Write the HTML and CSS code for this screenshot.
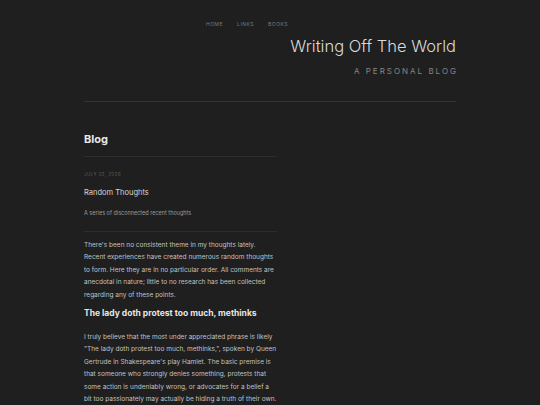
FILE: index.html
```html
<!DOCTYPE html>
<html>
<head>
<meta charset="utf-8">
<link rel="stylesheet" href="styles.css">
</head>
<body>
<div class="page">
  <header class="site-header">
    <nav class="nav">
      <a href="#">HOME</a>
      <a href="#">LINKS</a>
      <a href="#">BOOKS</a>
    </nav>
    <h1 class="site-title">Writing Off The World</h1>
    <div class="site-sub">A PERSONAL BLOG</div>
  </header>
  <main class="main">
    <div class="col">
      <h2 class="section-title">Blog</h2>
      <div class="post-head">
        <div class="date">JULY 02, 2026</div>
        <div class="post-title">Random Thoughts</div>
        <div class="post-desc">A series of disconnected recent thoughts</div>
      </div>
      <div class="post-body">
        <p>There's been no consistent theme in my thoughts lately. Recent experiences have created numerous random thoughts to form. Here they are in no particular order. All comments are anecdotal in nature; little to no research has been collected regarding any of these points.</p>
        <h3>The lady doth protest too much, methinks</h3>
        <p>I truly believe that the most under appreciated phrase is likely "The lady doth protest too much, methinks,", spoken by Queen Gertrude in Shakespeare's play Hamlet. The basic premise is that someone who strongly denies something, protests that some action is undeniably wrong, or advocates for a belief a bit too passionately may actually be hiding a truth of their own. One that they are likely ashamed of.</p>
      </div>
    </div>
  </main>
</div>
</body>
</html>
```
FILE: styles.css
```css
html, body {
  margin: 0;
  padding: 0;
  background: #1f1f1f;
  height: 100%;
  overflow: hidden;
}
body {
  font-family: "Inter", "DejaVu Sans", sans-serif;
  color: #cfcfcf;
}
.page {
  width: 372px;
  margin: 0 0 0 84px;
}
.site-header {
  display: flex;
  flex-direction: column;
  align-items: flex-end;
  padding-top: 20px;
  padding-bottom: 24px;
  border-bottom: 1px solid #343434;
}
.nav {
  display: flex;
  gap: 14px;
  align-self: flex-start;
  margin-left: 122px;
}
.nav a {
  color: #7a7a7a;
  text-decoration: none;
  font-size: 5px;
  letter-spacing: 0.5px;
  line-height: 8px;
}
.site-title {
  margin: 6px 0 0 0;
  font-weight: 300;
  font-size: 16.5px;
  line-height: 24px;
  color: #dadada;
}
.site-sub {
  margin-top: 7px;
  font-size: 8px;
  letter-spacing: 2px;
  margin-right: -2px;
  color: #858585;
  line-height: 12px;
}
.main {
  padding-top: 28px;
}
.col {
  width: 193px;
}
.section-title {
  margin: 0;
  font-size: 11px;
  font-weight: 700;
  color: #e8e8e8;
  line-height: 18px;
  padding-bottom: 8px;
  border-bottom: 1px solid #2e2e2e;
}
.post-head {
  padding: 14px 0 13px;
  border-bottom: 1px solid #2e2e2e;
}
.date {
  font-size: 4.5px;
  color: #5e5e5e;
  letter-spacing: 0.4px;
  line-height: 8px;
}
.post-title {
  margin-top: 8px;
  font-size: 7.5px;
  color: #d6d6d6;
  line-height: 11px;
}
.post-desc {
  margin-top: 11px;
  font-size: 5.5px;
  color: #9a9a9a;
  line-height: 9px;
}
.post-body p {
  margin: 7px 0 0;
  font-size: 6.5px;
  line-height: 12.4px;
  color: #c2c2c2;
}
.post-body h3 {
  margin: 6px 0 0;
  font-size: 8.5px;
  font-weight: 700;
  color: #e6e6e6;
  line-height: 12px;
}
.post-body h3 + p {
  margin-top: 12px;
  width: 192.6px;
}
```
